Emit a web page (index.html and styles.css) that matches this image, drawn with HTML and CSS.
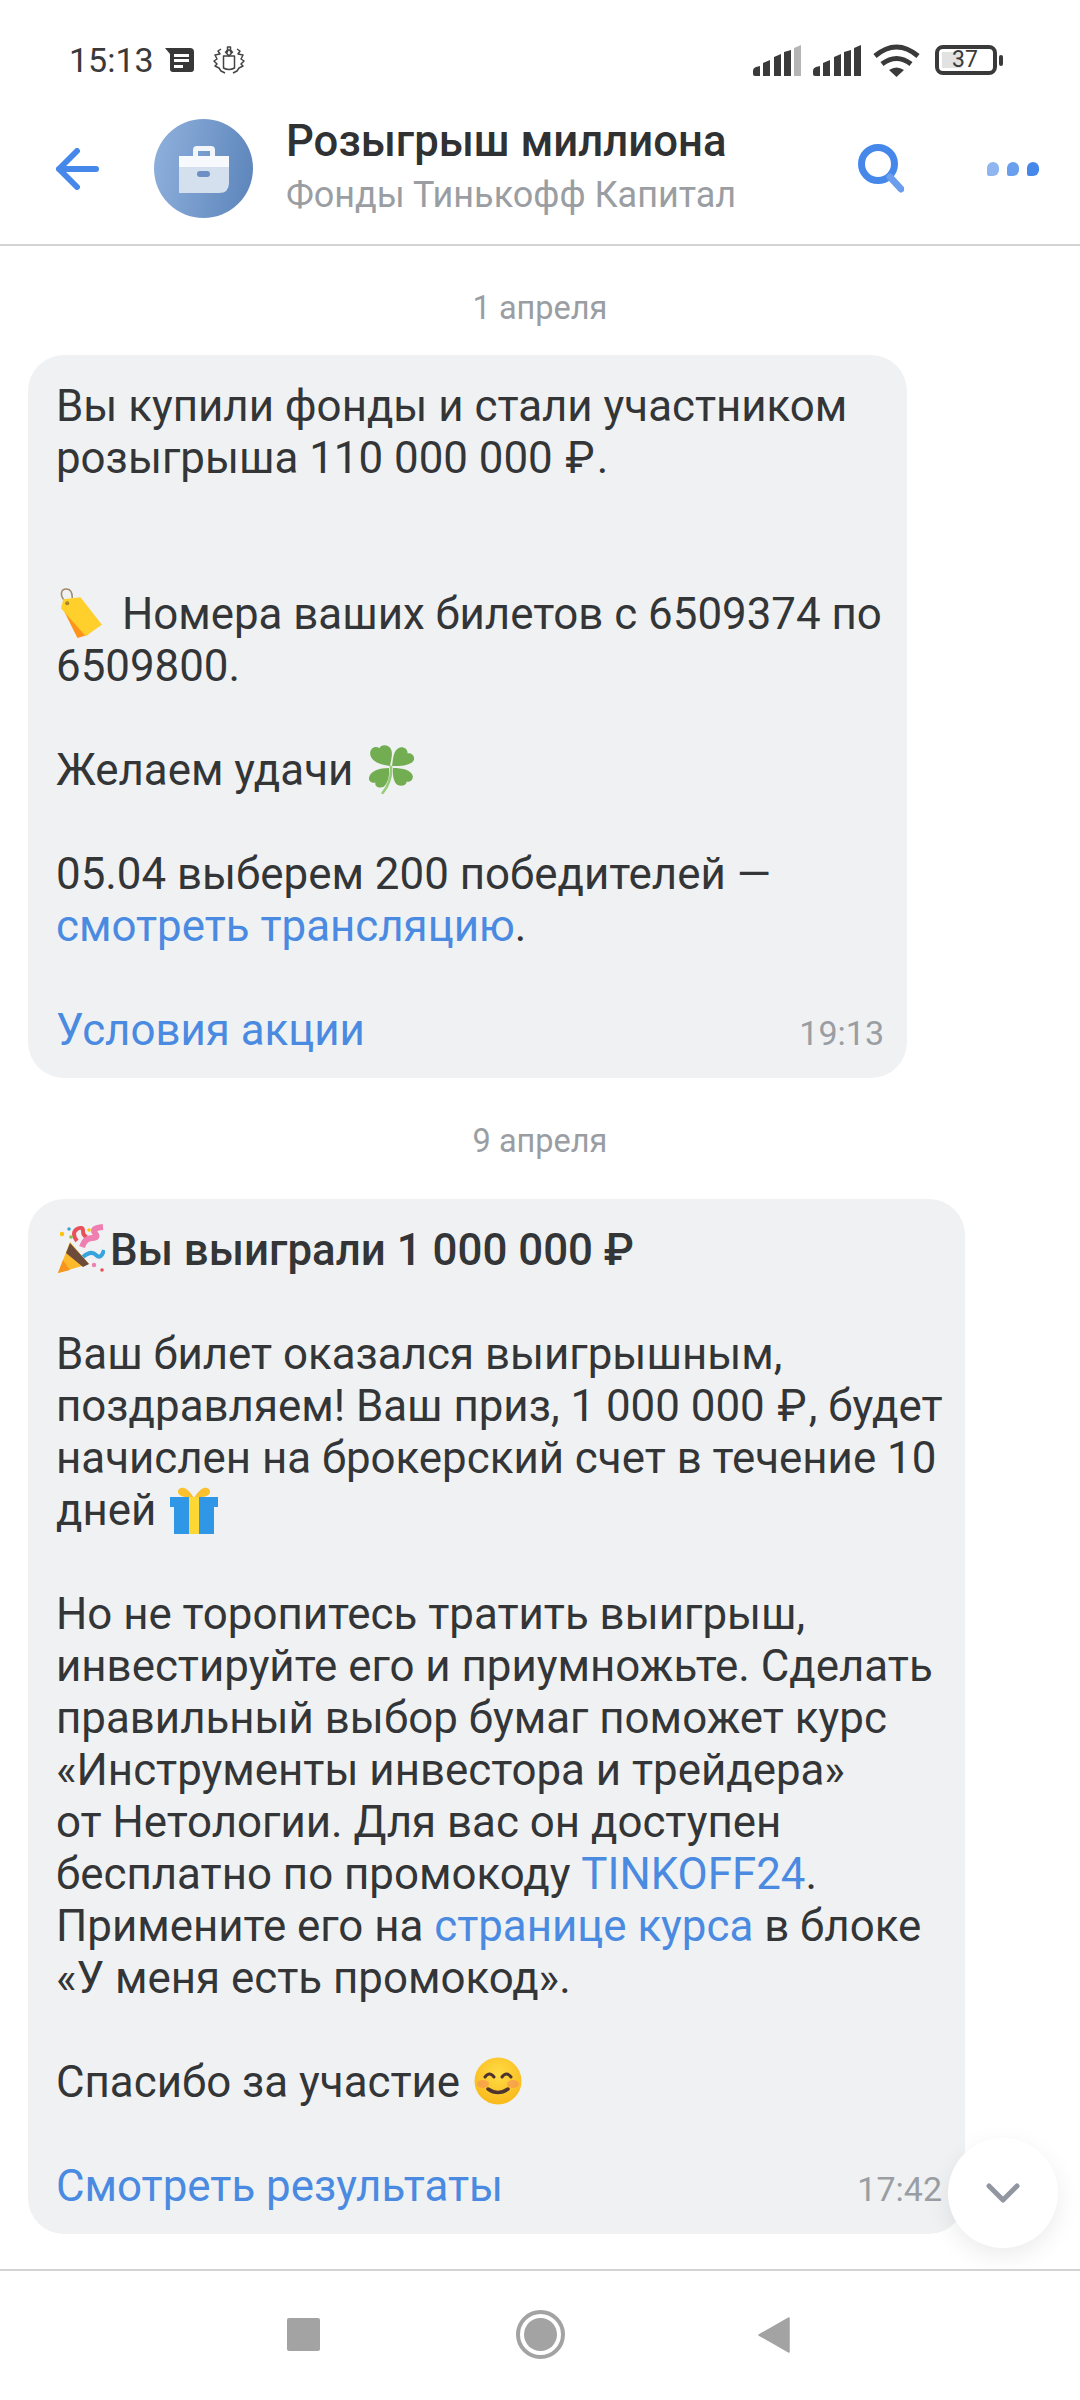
FILE: index.html
```html
<!DOCTYPE html>
<html lang="ru">
<head>
  <meta charset="UTF-8" />
  <meta name="viewport" content="width=device-width, initial-scale=1.0" />
  <title>Розыгрыш миллиона</title>
  <link rel="stylesheet" href="styles.css">
</head>
<body>

  <div class="status">
    <div class="status-left">
      <span class="clock">15:13</span>
      <svg class="ic-news" viewBox="0 0 29 24"><path d="M0 0h25a4 4 0 0 1 4 4v17a3 3 0 0 1-3 3H8a3 3 0 0 1-3-3V6z" fill="#383838"/><path d="M9 6h15v3H9zM9 11h15v3H9zM9 17h9v3H9z" fill="#fff"/></svg>
      <svg class="ic-crest" viewBox="0 0 32 28" fill="none" stroke="#444" stroke-width="1.5" stroke-linejoin="round"><path d="M10.5 10h11v12q-5.500 3-11 0z"/><path d="M13 7a3 3 0 0 1 6 0M14.500 1h3v5h2l-3.500 4-3.500-4h2z"/><path d="M8 3L5 5l2 3-5 1 2 4-3 2 3 3-2 2 4 2 2 3 4 2M24 3l3 2-2 3 5 1-2 4 3 2-3 3 2 2-4 2-2 3-4 2"/></svg>
    </div>
    <div class="status-right">
      <svg class="ic-signal" viewBox="0 0 48 31"><path d="M0 26q0-3 3-4l4-1v10H2q-2 0-2-2zM10 18l7-3v16h-7zM21 12l7-3v22h-7zM31 7l7-2v26h-7z" fill="#3a3a3a"/><path d="M41 3l7-3v31h-7z" fill="#b5b5b5"/></svg>
      <svg class="ic-signal" viewBox="0 0 48 31"><path d="M0 26q0-3 3-4l4-1v10H2q-2 0-2-2zM10 18l7-3v16h-7zM21 12l7-3v22h-7zM31 7l7-2v26h-7zM41 3l7-3v31h-7z" fill="#3a3a3a"/></svg>
      <svg class="ic-wifi" viewBox="0 0 47 34" fill="none" stroke="#3a3a3a" stroke-width="5"><path d="M2 13Q23.500-5 45 13M9 21q14.500-11 29 0"/><path d="M16 27q7.500-5 15 0l-7.500 7z" fill="#3a3a3a" stroke="none"/></svg>
      <div class="battery">
        <div class="battery-body"><span class="battery-level"></span><span class="battery-num">37</span></div>
        <span class="battery-nub"></span>
      </div>
    </div>
  </div>

  <div class="header">
    <svg class="ic-back" viewBox="0 0 43 42" fill="none" stroke="#4688ea" stroke-width="6" stroke-linecap="round" stroke-linejoin="round"><path d="M21 3L3 21l18 18M3 21h37"/></svg>
    <div class="avatar">
      <svg viewBox="0 0 52 48"><path d="M15 11V5a4 4 0 0 1 4-4h14a4 4 0 0 1 4 4v6h-5V6H20v5z" fill="#f2f5fa"/><path d="M1 11h50v11H1z" fill="#f7f9fc"/><path d="M1 22h50v16q0 10-10 10H1z" fill="#d5e0ef"/><rect x="19" y="26" width="13" height="6" rx="3" fill="#6c8fc4"/></svg>
    </div>
    <div class="chat-name">
      <div class="chat-title">Розыгрыш миллиона</div>
      <div class="chat-sub">Фонды Тинькофф Капитал</div>
    </div>
    <svg class="ic-search" viewBox="0 0 46 50" fill="none" stroke-width="7" stroke-linecap="round"><circle cx="20" cy="20" r="16.500" stroke="#4688ea"/><path d="M32 33l11 12" stroke="#6a9eec"/></svg>
    <div class="more"><span class="dot dot-1"></span><span class="dot dot-2"></span><span class="dot dot-3"></span></div>
  </div>

  <div class="feed">
    <div class="date">1 апреля</div>
    <div class="bubble bubble-first">
      Вы купили фонды и стали участником<br>
      розыгрыша 110 000 000 <span class="rub">₽</span>.<br>
      <br>
      <br>
      <svg class="emoji emoji-tag" viewBox="0 0 43 49"><path d="M7 13C1 7 3 1 8 1s6 4 6 9" fill="none" stroke="#a08a6a" stroke-width="1.500"/><path d="M3 17l16 32 10-3 8-8z" fill="#ff9418"/><path d="M3 20L5 11 22 9l21 27-16 11z" fill="#ffd02c"/><circle cx="9" cy="15" r="2" fill="#a8842c"/></svg> Номера ваших билетов с 6509374 по<br>
      6509800.<br>
      <br>
      Желаем удачи <svg class="emoji" viewBox="0 0 46 48"><g fill="#72ad52"><path d="M22 21C11 20 3 15 3 9c0-5 5-8 9-5 1-4 9-4 11 1 2 4 0 11-1 16z"/><path d="M24 21c1-6 1-14 6-17 4-2 9 0 9 5 4-1 7 3 6 6-1 4-10 7-21 6z"/><path d="M21 23c-9 0-18 3-19 9-1 4 3 6 6 5-1 4 4 6 8 4 4-3 6-11 5-18z"/><path d="M25 23c9 0 18 2 19 8 0 4-3 6-6 5 0 4-5 5-9 3-3-2-5-9-4-16z"/></g><path d="M23 22q1 14-8 25" fill="none" stroke="#96cc78" stroke-width="2.500" stroke-linecap="round"/></svg><br>
      <br>
      05.04 выберем 200 победителей —<br>
      <a class="link">смотреть трансляцию</a>.<br>
      <br>
      <div class="msg-foot"><a class="link">Условия акции</a><span class="time">19:13</span></div>
    </div>

    <div class="date date-second">9 апреля</div>
    <div class="bubble bubble-second">
      <svg class="emoji emoji-party" viewBox="0 0 48 50"><path d="M1 49l12-31 19 22z" fill="#fdb92c"/><path d="M1 49l5-13 7 10z" fill="#f7941e"/><path d="M13 19l19 21-6 3-17-14z" fill="#6d4b3a"/><path d="M20 17q-6-8 0-12 6-3 6 2t4 6" fill="none" stroke="#e8515a" stroke-width="4"/><path d="M25 23q3-9 10-9t3-5 8-6" fill="none" stroke="#ef7fb0" stroke-width="6"/><path d="M26 33q8-7 13-2t8-5" fill="none" stroke="#37a5dc" stroke-width="4"/><circle cx="5" cy="10" r="2.200" fill="#ffc107"/><circle cx="12" cy="5" r="1.800" fill="#37a5dc"/><circle cx="37" cy="41" r="2.200" fill="#ef7fb0"/><circle cx="45" cy="46" r="1.800" fill="#e8515a"/><circle cx="32" cy="6" r="1.800" fill="#ffc107"/><circle cx="14" cy="13" r="1.800" fill="#8bc34a"/></svg><b class="msg-head">Вы выиграли 1 000 000 ₽</b><br>
      <br>
      Ваш билет оказался выигрышным,<br>
      поздравляем! Ваш приз, 1 000 000 <span class="rub">₽</span>, будет<br>
      начислен на брокерский счет в течение 10<br>
      дней <svg class="emoji" viewBox="0 0 48 50"><path d="M24 14C16 0 9 3 8 7s5 7 16 7zM24 14C32 0 39 3 40 7s-5 7-16 7z" fill="#fbc02d"/><path d="M0 13h48v10H0z" fill="#2f97e6"/><path d="M4 23h40v27H4z" fill="#2f97e6"/><path d="M19 13h10v37H19z" fill="#fdd835"/></svg><br>
      <br>
      Но не торопитесь тратить выигрыш,<br>
      инвестируйте его и приумножьте. Сделать<br>
      правильный выбор бумаг поможет курс<br>
      «Инструменты инвестора и трейдера»<br>
      от Нетологии. Для вас он доступен<br>
      бесплатно по промокоду <a class="link">TINKOFF24</a>.<br>
      Примените его на <a class="link">странице курса</a> в блоке<br>
      «У меня есть промокод».<br>
      <br>
      Спасибо за участие <svg class="emoji" viewBox="0 0 48 48"><defs><radialGradient id="smileFace" cx="50%" cy="35%" r="65%"><stop offset="0" stop-color="#ffdc45"/><stop offset="1" stop-color="#f9b91c"/></radialGradient></defs><circle cx="24" cy="24" r="23.500" fill="url(#smileFace)"/><ellipse cx="9" cy="27" rx="6" ry="4" fill="#f58f5c" opacity=".6"/><ellipse cx="39" cy="27" rx="6" ry="4" fill="#f58f5c" opacity=".6"/><path d="M11 20q4.500-6 9 0M28 20q4.500-6 9 0" fill="none" stroke="#4e342e" stroke-width="3" stroke-linecap="round"/><path d="M14 32q10 7 20 0" fill="none" stroke="#4e342e" stroke-width="3.500" stroke-linecap="round"/></svg><br>
      <br>
      <div class="msg-foot"><a class="link">Смотреть результаты</a><span class="time">17:42</span></div>
    </div>

    <div class="scroll-down">
      <svg viewBox="0 0 34 20" fill="none" stroke="#9296a0" stroke-width="5" stroke-linecap="round" stroke-linejoin="round"><path d="M3 3l14 14L31 3"/></svg>
    </div>
  </div>

  <div class="nav">
    <span class="nav-stop"></span>
    <span class="nav-home"><span></span></span>
    <svg class="nav-back" viewBox="0 0 32 36"><path d="M31 1v34L1 18z" fill="#a3a3a3" stroke="#a3a3a3" stroke-width="1.500" stroke-linejoin="round"/></svg>
  </div>

</body>
</html>
```

FILE: styles.css
```css
* { box-sizing: border-box; }
body {
  font-family: Roboto, sans-serif;
  background-color: #fff;
  margin: 0;
  width: 1080px;
  height: 2400px;
  display: flex;
  flex-direction: column;
  color: #333537;
  overflow: hidden;
}

/* status bar */
.status {
  height: 100px;
  padding: 43px 77px 0 69px;
  display: flex;
  justify-content: space-between;
  align-items: flex-start;
}
.status-left { display: flex; align-items: center; height: 34px; }
.status-right { display: flex; align-items: center; height: 34px; }
.clock { font-size: 34px; color: #3a3a3a; width: 96px; }
.ic-news { width: 29px; height: 24px; }
.ic-crest { width: 32px; height: 28px; margin-left: 19px; }
.ic-signal { width: 48px; height: 31px; margin-right: 12px; }
.ic-wifi { width: 47px; height: 34px; margin-right: 15px; }
.battery { display: flex; align-items: center; }
.battery-body {
  width: 62px;
  height: 30px;
  border: 4px solid #3a3a3a;
  border-radius: 8px;
  position: relative;
  padding: 3px;
}
.battery-level { display: block; width: 20px; height: 16px; background-color: #e2e2e2; }
.battery-num {
  position: absolute;
  left: 13px;
  top: -2px;
  font-size: 23px;
  line-height: 26px;
  color: #3a3a3a;
}
.battery-nub { width: 4px; height: 11px; margin-left: 2px; background-color: #3a3a3a; border-radius: 2px; }

/* header */
.header {
  height: 146px;
  padding: 0 41px 7px 56px;
  display: flex;
  align-items: center;
  border-bottom: 2px solid #d2d3d5;
}
.ic-back { width: 43px; height: 42px; }
.avatar {
  width: 99px;
  height: 99px;
  margin-left: 55px;
  border-radius: 50%;
  background: linear-gradient(100deg, #90b1dd, #5b84ba);
  display: flex;
  align-items: center;
  justify-content: center;
}
.avatar svg { width: 52px; height: 48px; }
.chat-name { margin-left: 33px; flex: 1; }
.chat-title { font-size: 43.7px; font-weight: 500; line-height: 52px; color: #2f3133; }
.chat-sub { font-size: 36px; line-height: 56px; color: #9a9ea3; }
.ic-search { width: 46px; height: 50px; margin-right: -1px; }
.more { display: flex; gap: 8px; margin-left: 84px; }
.dot { width: 12px; height: 14px; border-radius: 6px 6px 6px 2px; }
.dot-1 { background-color: #8fb6f1; }
.dot-2 { background-color: #6a9fee; }
.dot-3 { background-color: #4688ea; }

/* messages */
.feed { flex: 1; position: relative; padding: 0 28px; overflow: hidden; }
.date {
  text-align: center;
  font-size: 32.5px;
  line-height: 36px;
  color: #9a9ea3;
  margin-top: 44px;
  margin-bottom: 29px;
}
.date-second { margin-top: 45px; margin-bottom: 40px; }
.bubble {
  background-color: #eff1f3;
  border-radius: 36px;
  padding: 25px 23px 22px 28px;
  font-size: 43.85px;
  line-height: 52px;
  white-space: nowrap;
}
.bubble-first { width: 879px; }
.bubble-second { width: 937px; }
.link { color: #4a8ae0; }
.rub { margin: 0 2px; }
.msg-head { font-weight: 500; }
.msg-foot { display: flex; justify-content: space-between; align-items: center; }
.time { font-size: 34px; line-height: 40px; color: #9a9ea3; margin-top: 6px; }
.emoji { width: 48px; height: 50px; margin: -10px 0 -10px 3px; vertical-align: 1px; }
.emoji-tag { margin-left: 0; margin-right: 7px; }
.emoji-party { margin-left: 1px; margin-right: 5px; }

.scroll-down {
  position: absolute;
  left: 948px;
  top: 1892px;
  width: 110px;
  height: 110px;
  border-radius: 50%;
  background-color: #fff;
  box-shadow: 0 8px 24px rgba(0, 0, 0, 0.08);
  display: flex;
  align-items: center;
  justify-content: center;
}
.scroll-down svg { width: 34px; height: 20px; }

/* bottom nav */
.nav {
  height: 131px;
  border-top: 2px solid #d2d3d5;
  padding-bottom: 2px;
  padding-left: 287px;
  display: flex;
  align-items: center;
}
.nav-stop { width: 33px; height: 33px; background-color: #a3a3a3; border-radius: 2px; }
.nav-home {
  width: 49px;
  height: 49px;
  margin-left: 196px;
  border: 4px solid #a3a3a3;
  border-radius: 50%;
  padding: 4px;
}
.nav-home span { display: block; width: 33px; height: 33px; background-color: #a3a3a3; border-radius: 50%; }
.nav-back { width: 32px; height: 36px; margin-left: 193px; }
```
